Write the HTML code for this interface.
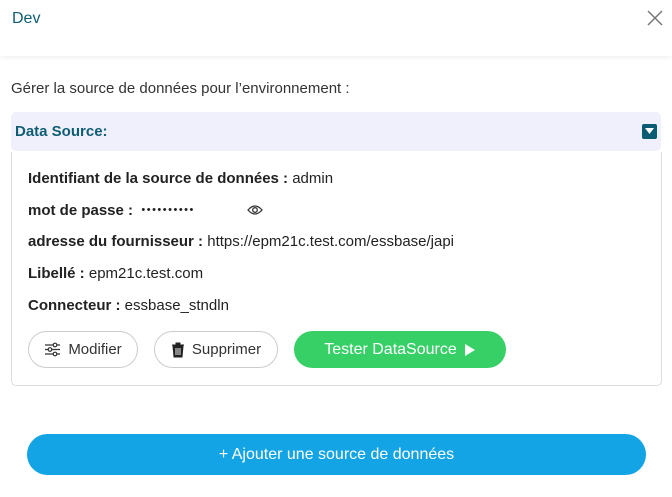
<!DOCTYPE html>
<html><head><meta charset="utf-8"><style>
*{margin:0;padding:0;box-sizing:border-box}
body{width:672px;height:497px;background:#fff;font-family:"Liberation Sans",sans-serif;position:relative;overflow:hidden;color:#222}
.a{position:absolute;white-space:nowrap}
.hdr{position:absolute;left:0;top:0;width:672px;height:56px;background:#fff;box-shadow:0 2px 4px rgba(0,0,0,0.06)}
.row{font-size:15px;letter-spacing:0;color:#222}
.row b{color:#222}
.btn{position:absolute;top:331px;height:37px;border-radius:19px;border:1px solid #ccc;background:#fff;font-size:15px;letter-spacing:0;color:#333;display:flex;align-items:center;justify-content:center;gap:7px}
</style></head><body>
<div class="hdr"></div>
<div class="a" style="left:12px;top:10px;font-size:16px;color:#0f5d75">Dev</div>
<svg class="a" style="left:647px;top:10px" width="16" height="16" viewBox="0 0 16 16"><path d="M1 1L15 15M15 1L1 15" stroke="#777" stroke-width="1.5"/></svg>
<div class="a" style="left:11px;top:80px;font-size:15px;letter-spacing:0;color:#333">Gérer la source de données pour l’environnement :</div>
<div class="a" style="left:11px;top:112px;width:650px;height:39px;background:#f0f0fc;border-radius:5px"></div>
<div class="a" style="left:15px;top:123px;font-size:15px;font-weight:bold;color:#0f5d75">Data Source:</div>
<div class="a" style="left:642px;top:124px;width:15px;height:15px;background:#0b5b73;border-radius:2px"></div>
<svg class="a" style="left:645px;top:128px" width="9" height="7"><path d="M0 0H9L4.5 6Z" fill="#fff"/></svg>
<div class="a" style="left:11px;top:152px;width:651px;height:234px;border:1px solid #ddd;border-top:none;border-radius:0 0 5px 5px"></div>
<div class="a row" style="left:28px;top:170px"><b>Identifiant de la source de données :</b> admin</div>
<div class="a row" style="left:28px;top:202px"><b>mot de passe :</b> &nbsp;<span style="font-size:11px;letter-spacing:1.5px;vertical-align:2px">••••••••••</span></div>
<svg class="a" style="left:247px;top:204px" width="16" height="12" viewBox="0 0 16 12"><path d="M1 6Q8 -2 15 6Q8 14 1 6Z" fill="none" stroke="#333" stroke-width="1.3"/><circle cx="8" cy="6" r="2.3" fill="none" stroke="#333" stroke-width="1.3"/></svg>
<div class="a row" style="left:28px;top:233px"><b>adresse du fournisseur :</b> https://epm21c.test.com/essbase/japi</div>
<div class="a row" style="left:28px;top:265px"><b>Libellé :</b> epm21c.test.com</div>
<div class="a row" style="left:28px;top:297px"><b>Connecteur :</b> essbase_stndln</div>
<div class="btn" style="left:28px;width:110px"><svg width="17" height="15" viewBox="0 0 17 15"><g stroke="#333" stroke-width="1.2" fill="none"><path d="M1 3H9M13 3H16M1 7.5H4M8 7.5H16M1 12H9M13 12H16"/><circle cx="11" cy="3" r="1.8"/><circle cx="6" cy="7.5" r="1.8"/><circle cx="11" cy="12" r="1.8"/></g></svg>Modifier</div>
<div class="btn" style="left:154px;width:124px"><svg width="14" height="16" viewBox="0 0 14 16"><path d="M1 3H13M5 3V1H9V3M2 4L3 15H11L12 4Z" fill="#222" stroke="#222" stroke-width="1"/><path d="M5 6V13M7 6V13M9 6V13" stroke="#fff" stroke-width="0.9"/></svg>Supprimer</div>
<div class="btn" style="left:294px;width:212px;background:#37d067;border:none;color:#fff;font-size:16px">Tester DataSource <svg width="12" height="14"><path d="M1 1L11 7L1 13Z" fill="#fff"/></svg></div>
<div class="a" style="left:27px;top:434px;width:619px;height:41px;background:#13a4e6;border-radius:21px;color:#fff;font-size:16px;display:flex;align-items:center;justify-content:center">+ Ajouter une source de données</div>
</body></html>
